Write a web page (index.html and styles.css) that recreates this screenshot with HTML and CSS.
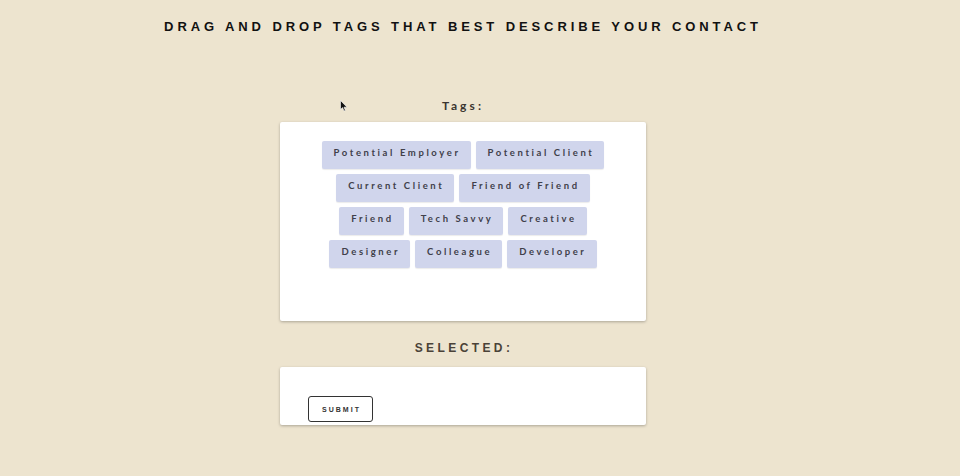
FILE: index.html
```html
<!DOCTYPE html>
<html>
<head>
<meta charset="utf-8">
<link rel="stylesheet" href="styles.css">
</head>
<body>
<div class="page">
  <h1 class="title">DRAG AND DROP TAGS THAT BEST DESCRIBE YOUR CONTACT</h1>
  <h2 class="label tags-label">Tags:</h2>
  <div class="card tags-card">
    <div class="tags">
      <span class="tag">Potential Employer</span>
      <span class="tag">Potential Client</span>
      <span class="tag">Current Client</span>
      <span class="tag">Friend of Friend</span>
      <span class="tag">Friend</span>
      <span class="tag">Tech Savvy</span>
      <span class="tag">Creative</span>
      <span class="tag">Designer</span>
      <span class="tag">Colleague</span>
      <span class="tag">Developer</span>
    </div>
  </div>
  <h2 class="label selected-label">SELECTED:</h2>
  <div class="card selected-card">
    <button class="submit">SUBMIT</button>
  </div>
</div>
<svg class="cursor" width="8" height="12" viewBox="0 0 8 12"><path d="M0.5 0.5 L0.5 9.5 L2.6 7.6 L4 11 L5.4 10.4 L4 7.2 L7 7.2 Z" fill="#111" stroke="#fff" stroke-width="0.6"/></svg>
</body>
</html>
```
FILE: styles.css
```css
html, body {
  margin: 0;
  padding: 0;
  background: #ede4cf;
}
body {
  position: relative;
  width: 960px;
  height: 476px;
  overflow: hidden;
}
.page {
  width: 926px;
  display: flex;
  flex-direction: column;
  align-items: center;
}
.title {
  margin: 19px 0 0 0;
  font-family: "Liberation Sans", Arial, sans-serif;
  font-weight: bold;
  font-size: 13px;
  letter-spacing: 3.9px;
  line-height: 16px;
  color: #111;
}
.label {
  margin: 0;
  font-weight: bold;
  color: #3a3530;
}
.tags-label {
  margin-top: 64px;
  font-family: Lato, sans-serif;
  font-size: 12px;
  letter-spacing: 3.1px;
  line-height: 14px;
}
.card {
  width: 366px;
  background: #fff;
  border-radius: 2px;
  box-shadow: 0 1px 3px rgba(0,0,0,0.28);
  box-sizing: border-box;
}
.tags-card {
  margin-top: 9px;
  height: 199px;
  padding: 19px 30px;
}
.tags {
  display: flex;
  flex-wrap: wrap;
  justify-content: center;
  gap: 5px 5px;
}
.tag {
  display: block;
  background: #d0d5ec;
  border-radius: 2px;
  box-shadow: 0 1px 1px rgba(0,0,0,0.08);
  font-family: Lato, sans-serif;
  font-size: 9.5px;
  font-weight: bold;
  letter-spacing: 2.6px;
  line-height: 12px;
  color: #40404a;
  padding: 6px 10px 10px 12px;
  height: 28px;
  box-sizing: border-box;
}
.selected-label {
  margin-top: 20px;
  font-family: "Liberation Sans", Arial, sans-serif;
  font-size: 12px;
  letter-spacing: 3.4px;
  line-height: 14px;
  padding-left: 2px;
  color: #4a4238;
}
.selected-card {
  margin-top: 12px;
  height: 58px;
  padding: 29px 0 0 28px;
}
.submit {
  display: block;
  width: 65px;
  height: 26px;
  background: #fff;
  border: 1.5px solid #333;
  border-radius: 3px;
  font-family: "Liberation Sans", Arial, sans-serif;
  font-weight: bold;
  font-size: 7px;
  letter-spacing: 2px;
  color: #333;
  padding: 0 0 0 2px;
}
.cursor {
  position: absolute;
  left: 340px;
  top: 100px;
}
```
